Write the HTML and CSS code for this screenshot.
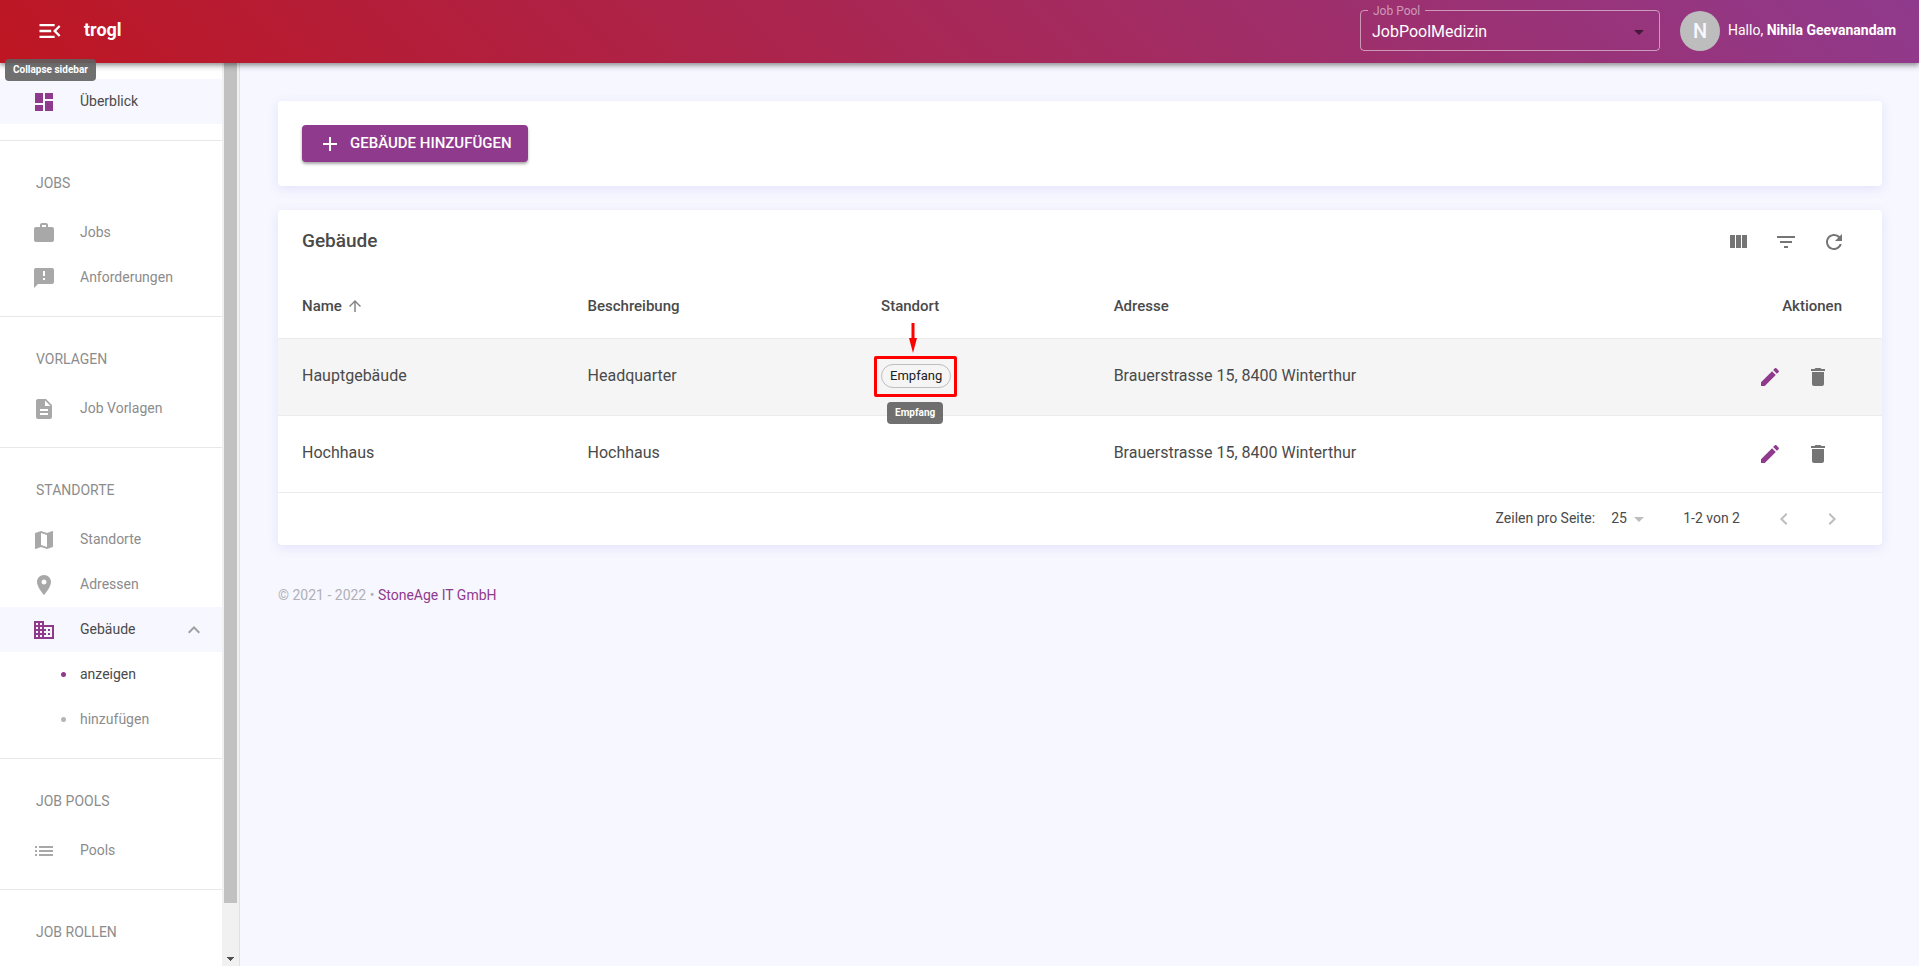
FILE: index.html
```html
<!DOCTYPE html>
<html lang="de">
<head>
<meta charset="utf-8">
<title>trogl – Gebäude</title>
<link rel="stylesheet" href="styles.css">
</head>
<body>
<header class="topbar">
  <button class="icon-button menu-button" type="button" aria-label="Collapse sidebar" aria-describedby="menu-tip">
    <svg class="icon icon-large" viewBox="0 0 24 24"><path d="M3 18h13v-2H3v2zM3 6v2h13V6H3zm0 7h10v-2H3v2zm18 2.590L17.420 12 21 8.410 19.590 7l-5 5 5 5L21 15.590z"/></svg>
    <span class="tooltip menu-tip" role="tooltip" id="menu-tip">Collapse sidebar</span>
  </button>
  <a class="brand" href="#">trogl</a>
  <fieldset class="pool-field">
    <legend><label for="pool">Job Pool</label></legend>
    <select id="pool"><option>JobPoolMedizin</option></select>
    <svg class="icon pool-arrow" viewBox="0 0 24 24"><path d="M7 10l5 5 5-5z"/></svg>
  </fieldset>
  <div class="account">
    <span class="avatar">N</span>
    <span class="greeting">Hallo, <strong>Nihila Geevanandam</strong></span>
  </div>
</header>
<div class="shell">
  <aside class="sidebar">
    <nav class="nav">
      <section class="nav-group">
        <a class="nav-item active" href="#"><svg class="icon" viewBox="0 0 24 24"><path d="M3 13h8V3H3v10zm0 8h8v-6H3v6zm10 0h8V11h-8v10zm0-18v6h8V3h-8z"/></svg><span>Überblick</span></a>
      </section>
      <section class="nav-group">
        <h2 class="nav-title">JOBS</h2>
        <a class="nav-item" href="#"><svg class="icon" viewBox="0 0 24 24"><path d="M20 6h-4V4c0-1.110-.890-2-2-2h-4c-1.110 0-2 .890-2 2v2H4c-1.110 0-2 .890-2 2v11c0 1.110.890 2 2 2h16c1.110 0 2-.890 2-2V8c0-1.110-.890-2-2-2zm-6 0h-4V4h4v2z"/></svg><span>Jobs</span></a>
        <a class="nav-item" href="#"><svg class="icon" viewBox="0 0 24 24"><path d="M20 2H4c-1.100 0-2 .900-2 2v18l4-4h14c1.100 0 2-.900 2-2V4c0-1.100-.900-2-2-2zm-7 12h-2v-2h2v2zm0-4h-2V5h2v5z"/></svg><span>Anforderungen</span></a>
      </section>
      <section class="nav-group">
        <h2 class="nav-title">VORLAGEN</h2>
        <a class="nav-item" href="#"><svg class="icon" viewBox="0 0 24 24"><path d="M14 2H6c-1.100 0-2 .900-2 2v16c0 1.100.900 2 2 2h12c1.100 0 2-.900 2-2V8l-6-6zm2 16H8v-2h8v2zm0-4H8v-2h8v2zm-3-5V3.500L18.500 9H13z"/></svg><span>Job Vorlagen</span></a>
      </section>
      <section class="nav-group">
        <h2 class="nav-title">STANDORTE</h2>
        <a class="nav-item" href="#"><svg class="icon" viewBox="0 0 24 24"><path d="M20.500 3l-.160.030L15 5.100 9 3 3.360 4.900c-.210.070-.360.250-.360.480V20.500c0 .280.220.500.500.500l.160-.030L9 18.900l6 2.100 5.640-1.900c.210-.070.360-.250.360-.480V3.500c0-.280-.220-.500-.500-.500zM15 19l-6-2.110V5l6 2.110V19z"/></svg><span>Standorte</span></a>
        <a class="nav-item" href="#"><svg class="icon" viewBox="0 0 24 24"><path d="M12 2C8.130 2 5 5.130 5 9c0 5.250 7 13 7 13s7-7.750 7-13c0-3.870-3.130-7-7-7zm0 9.500c-1.380 0-2.500-1.120-2.500-2.500s1.120-2.500 2.500-2.500 2.500 1.120 2.500 2.500-1.120 2.500-2.500 2.500z"/></svg><span>Adressen</span></a>
        <a class="nav-item active" href="#"><svg class="icon" viewBox="0 0 24 24"><path d="M12 7V3H2v18h20V7H12zM6 19H4v-2h2v2zm0-4H4v-2h2v2zm0-4H4V9h2v2zm0-4H4V5h2v2zm4 12H8v-2h2v2zm0-4H8v-2h2v2zm0-4H8V9h2v2zm0-4H8V5h2v2zm10 12h-8v-2h2v-2h-2v-2h2v-2h-2V9h8v10zm-2-8h-2v2h2v-2zm0 4h-2v2h2v-2z"/></svg><span>Gebäude</span><svg class="icon nav-chevron" viewBox="0 0 24 24"><path d="M12 8l-6 6 1.410 1.410L12 10.830l4.590 4.580L18 14z"/></svg></a>
        <a class="nav-item nav-sub current" href="#"><i class="dot"></i><span>anzeigen</span></a>
        <a class="nav-item nav-sub" href="#"><i class="dot"></i><span>hinzufügen</span></a>
      </section>
      <section class="nav-group">
        <h2 class="nav-title">JOB POOLS</h2>
        <a class="nav-item" href="#"><svg class="icon" viewBox="0 0 24 24"><path d="M3 13h2v-2H3v2zm0 4h2v-2H3v2zm0-8h2V7H3v2zm4 4h14v-2H7v2zm0 4h14v-2H7v2zM7 7v2h14V7H7z"/></svg><span>Pools</span></a>
      </section>
      <section class="nav-group">
        <h2 class="nav-title">JOB ROLLEN</h2>
      </section>
    </nav>
    <div class="scrollbar" aria-hidden="true">
      <div class="scroll-thumb"></div>
      <svg class="scroll-arrow" viewBox="0 0 17 17"><path d="M5 8h7v1h-1v1h-1v1H9v1H8v-1H7v-1H6V9H5z"/></svg>
    </div>
  </aside>
  <main class="main">
    <section class="card actions-card">
      <button class="primary-button" type="button"><svg class="icon" viewBox="0 0 24 24"><path d="M19 13h-6v6h-2v-6H5v-2h6V5h2v6h6v2z"/></svg><span>GEBÄUDE HINZUFÜGEN</span></button>
    </section>
    <section class="card">
      <div class="toolbar">
        <h1 class="card-title">Gebäude</h1>
        <button class="icon-button" type="button" aria-label="Spalten"><svg class="icon" viewBox="0 0 24 24"><path d="M4 5h5v13H4zM10 5h5v13h-5zM16 5h5v13h-5z"/></svg></button>
        <button class="icon-button" type="button" aria-label="Filter"><svg class="icon" viewBox="0 0 24 24"><path d="M10 18h4v-2h-4v2zM3 6v2h18V6H3zm3 7h12v-2H6v2z"/></svg></button>
        <button class="icon-button" type="button" aria-label="Aktualisieren"><svg class="icon" viewBox="0 0 24 24"><path d="M17.650 6.350C16.200 4.900 14.210 4 12 4c-4.420 0-7.990 3.580-7.990 8s3.570 8 7.990 8c3.730 0 6.840-2.550 7.730-6h-2.080c-.820 2.330-3.040 4-5.650 4-3.310 0-6-2.690-6-6s2.690-6 6-6c1.660 0 3.140.690 4.220 1.780L13 11h7V4l-2.350 2.350z"/></svg></button>
      </div>
      <table class="table">
        <colgroup><col class="col-name"><col class="col-desc"><col class="col-site"><col><col class="col-actions"></colgroup>
        <thead>
          <tr>
            <th><span class="sort">Name <svg class="icon icon-small" viewBox="0 0 24 24"><path d="M4 12l1.410 1.410L11 7.830V20h2V7.830l5.580 5.590L20 12l-8-8-8 8z"/></svg></span></th>
            <th>Beschreibung</th><th>Standort</th><th>Adresse</th><th class="cell-actions">Aktionen</th>
          </tr>
        </thead>
        <tbody>
          <tr class="hovered">
            <td>Hauptgebäude</td><td>Headquarter</td>
            <td><span class="chip-wrap"><span class="chip">Empfang</span>
              <span class="marker"></span>
              <svg class="marker-arrow" viewBox="0 0 10 30"><path d="M3.500 0h3v15H9L5 30 1 15h2.500z"/></svg>
              <span class="tooltip chip-tip" role="tooltip">Empfang</span></span></td>
            <td>Brauerstrasse 15, 8400 Winterthur</td>
            <td class="cell-actions"><div class="row-actions">
              <button class="icon-button edit" type="button" aria-label="Bearbeiten"><svg class="icon" viewBox="0 0 24 24"><path d="M3 17.250V21h3.750L17.810 9.940l-3.750-3.750L3 17.250zM20.710 7.040c.390-.390.390-1.020 0-1.410l-2.340-2.340c-.390-.390-1.020-.390-1.410 0l-1.830 1.830 3.750 3.750 1.830-1.830z"/></svg></button>
              <button class="icon-button" type="button" aria-label="Löschen"><svg class="icon" viewBox="0 0 24 24"><path d="M6 19c0 1.100.900 2 2 2h8c1.100 0 2-.900 2-2V7H6v12zM19 4h-3.500l-1-1h-5l-1 1H5v2h14V4z"/></svg></button>
            </div></td>
          </tr>
          <tr>
            <td>Hochhaus</td><td>Hochhaus</td><td></td>
            <td>Brauerstrasse 15, 8400 Winterthur</td>
            <td class="cell-actions"><div class="row-actions">
              <button class="icon-button edit" type="button" aria-label="Bearbeiten"><svg class="icon" viewBox="0 0 24 24"><path d="M3 17.250V21h3.750L17.810 9.940l-3.750-3.750L3 17.250zM20.710 7.040c.390-.390.390-1.020 0-1.410l-2.340-2.340c-.390-.390-1.020-.390-1.410 0l-1.830 1.830 3.750 3.750 1.830-1.830z"/></svg></button>
              <button class="icon-button" type="button" aria-label="Löschen"><svg class="icon" viewBox="0 0 24 24"><path d="M6 19c0 1.100.900 2 2 2h8c1.100 0 2-.900 2-2V7H6v12zM19 4h-3.500l-1-1h-5l-1 1H5v2h14V4z"/></svg></button>
            </div></td>
          </tr>
        </tbody>
      </table>
      <div class="pagination">
        <label for="rows">Zeilen pro Seite:</label>
        <span class="rows-field"><select id="rows"><option>25</option></select><svg class="icon rows-arrow" viewBox="0 0 24 24"><path d="M7 10l5 5 5-5z"/></svg></span>
        <span class="range">1-2 von 2</span>
        <button class="icon-button pager" type="button" aria-label="Vorherige Seite"><svg class="icon" viewBox="0 0 24 24"><path d="M15.410 7.410L14 6l-6 6 6 6 1.410-1.410L10.830 12z"/></svg></button>
        <button class="icon-button pager" type="button" aria-label="Nächste Seite"><svg class="icon" viewBox="0 0 24 24"><path d="M10 6L8.590 7.410 13.170 12l-4.580 4.590L10 18l6-6z"/></svg></button>
      </div>
    </section>
    <footer class="footer">© 2021 - 2022 • <a href="#">StoneAge IT GmbH</a></footer>
  </main>
</div>
</body>
</html>
```
FILE: styles.css
```css
* {
  box-sizing: border-box;
}

body {
  margin: 0;
  height: 100vh;
  display: flex;
  flex-direction: column;
  overflow: hidden;
  background: #f7f7ff;
  color: #4a4a4a;
  font-family: Roboto, "Liberation Sans", sans-serif;
  font-size: 14px;
  line-height: 20px;
}

button,
select {
  font: inherit;
  border: 0;
  background: none;
}

a {
  color: inherit;
  text-decoration: none;
}

.icon {
  width: 24px;
  height: 24px;
  flex: none;
  display: block;
  fill: currentColor;
}

.icon-large {
  width: 28px;
  height: 28px;
}

.icon-small {
  width: 18px;
  height: 18px;
}

.icon-button {
  width: 48px;
  height: 48px;
  padding: 0;
  display: flex;
  align-items: center;
  justify-content: center;
  color: #757575;
}

.tooltip {
  position: absolute;
  padding: 4px 8px;
  border-radius: 4px;
  background: rgba(97, 97, 97, 0.9);
  color: #fff;
  font-size: 10px;
  font-weight: 700;
  line-height: 14px;
  white-space: nowrap;
}

/* Top bar */
.topbar {
  position: relative;
  z-index: 2;
  flex: none;
  height: 63px;
  padding: 0 19px 2px 26px;
  display: flex;
  align-items: center;
  background: linear-gradient(45deg, #be1622, #903a8d);
  box-shadow: 0 2px 4px rgba(0, 0, 0, 0.3), 0 4px 6px rgba(0, 0, 0, 0.15);
  color: #fff;
}

.menu-button {
  position: relative;
  color: #fff;
}

.menu-tip {
  top: 52px;
  left: -21px;
}

.brand {
  margin-left: 10px;
  padding-bottom: 2px;
  font-size: 18px;
  font-weight: 700;
}

.pool-field {
  position: relative;
  width: 300px;
  height: 46px;
  margin: 0 20px 6px auto;
  padding: 0 0 0 11px;
  border: 1px solid rgba(255, 255, 255, 0.5);
  border-radius: 4px;
}

.pool-field legend {
  margin-left: -4px;
  padding: 0 5px;
  color: rgba(255, 255, 255, 0.5);
  font-size: 12px;
  line-height: 12px;
}

.pool-field select {
  width: 100%;
  padding: 0;
  appearance: none;
  color: #fff;
  font-size: 16px;
  line-height: 30px;
}

.pool-arrow {
  position: absolute;
  top: 3px;
  right: 8px;
  color: rgba(0, 0, 0, 0.54);
  pointer-events: none;
}

.account {
  display: flex;
  align-items: center;
  gap: 8px;
}

.greeting {
  min-width: 172px;
  padding-bottom: 2px;
}

.avatar {
  width: 40px;
  height: 40px;
  border-radius: 50%;
  background: #bdbdbd;
  color: #f7f7ff;
  font-size: 20px;
  font-weight: 500;
  line-height: 40px;
  text-align: center;
}

/* Sidebar */
.shell {
  flex: 1;
  min-height: 0;
  display: flex;
}

.sidebar {
  width: 240px;
  flex: none;
  display: flex;
  background: #fff;
  border-right: 1px solid #e0e0e0;
}

.nav {
  flex: 1;
  overflow: hidden;
}

.nav-group {
  padding: 16px 0;
}

.nav-group + .nav-group {
  border-top: 1px solid #e8e8e8;
}

.nav-title {
  margin: 0;
  padding: 16px 36px 17px;
  color: #8c8c8c;
  font-size: 14px;
  font-weight: 400;
}

.nav-item {
  height: 45px;
  padding: 0 16px 0 32px;
  display: flex;
  align-items: center;
  gap: 24px;
  color: #8c8c8c;
}

.nav-item span {
  padding-bottom: 2px;
}

.nav-item .icon {
  color: #a8a8a8;
}

.nav-item.active {
  background: #f7f7ff;
}

.nav-item.active,
.nav-item.current {
  color: #4a4a4a;
}

.nav-item.active .icon {
  color: #903a8d;
}

.nav-item .nav-chevron,
.nav-item.active .nav-chevron {
  margin-left: auto;
  color: #9e9e9e;
}

.nav-sub {
  padding-left: 61px;
  gap: 14px;
}

.dot {
  width: 5px;
  height: 5px;
  border-radius: 50%;
  background: #b5b5b5;
}

.current .dot {
  background: #903a8d;
}

.scrollbar {
  width: 17px;
  display: flex;
  flex-direction: column;
  background: #f1f1f1;
}

.scroll-thumb {
  flex: 1;
  margin: 0 2px 46px;
  background: #c1c1c1;
}

.scroll-arrow {
  width: 17px;
  height: 17px;
  fill: #505050;
}

/* Main area */
.main {
  flex: 1;
  min-width: 0;
  padding: 38px 37px 0 38px;
  display: flex;
  flex-direction: column;
  gap: 24px;
}

.card {
  border-radius: 4px;
  background: #fff;
  box-shadow: 0 3px 12px rgba(80, 80, 220, 0.12);
}

.actions-card {
  padding: 24px;
}

.primary-button {
  height: 37px;
  padding: 0 16px;
  display: flex;
  align-items: center;
  gap: 8px;
  border-radius: 4px;
  background: #903a8d;
  box-shadow: 0 2px 3px rgba(0, 0, 0, 0.35);
  color: #fff;
  font-size: 15px;
  font-weight: 500;
}

.primary-button span {
  padding-bottom: 2px;
}

.toolbar {
  height: 64px;
  padding: 0 24px;
  display: flex;
  align-items: center;
}

.card-title {
  margin: 0 auto 0 0;
  padding-bottom: 2px;
  font-size: 19px;
  font-weight: 500;
}

.table {
  width: 100%;
  border-collapse: separate;
  border-spacing: 0;
  table-layout: fixed;
  font-size: 16px;
}

.col-name,
.col-desc {
  width: 18.3%;
}

.col-site {
  width: 14.5%;
}

.col-actions {
  width: 200px;
}

.table th,
.table td {
  padding: 0 16px;
  border-bottom: 1px solid #ebebeb;
  text-align: left;
}

.table th {
  height: 65px;
  font-size: 15px;
  font-weight: 500;
}

.table td {
  height: 77px;
  padding-bottom: 2px;
}

.table th:first-child,
.table td:first-child {
  padding-left: 24px;
}

.table .cell-actions {
  padding-right: 40px;
  padding-bottom: 0;
  text-align: right;
}

.hovered {
  background: #f5f5f5;
}

.sort {
  display: flex;
  align-items: center;
  gap: 4px;
}

.sort .icon {
  color: #858585;
}

.row-actions {
  display: flex;
  justify-content: flex-end;
}

.edit {
  color: #903a8d;
}

.chip-wrap {
  position: relative;
  display: inline-block;
}

.chip {
  display: block;
  padding: 0 8px;
  border: 1px solid #bdbdbd;
  border-radius: 12px;
  color: #212121;
  font-size: 13px;
  line-height: 22px;
}

.marker {
  position: absolute;
  inset: -8px -6px -9px -7px;
  border: 3px solid #f00;
  border-radius: 2px;
}

.marker-arrow {
  position: absolute;
  top: -41px;
  left: 27px;
  width: 10px;
  height: 30px;
  fill: #f00;
}

.chip-tip {
  top: 38px;
  left: 6px;
}

.pagination {
  height: 52px;
  padding-right: 26px;
  display: flex;
  align-items: center;
}

.pagination label,
.range {
  padding-bottom: 2px;
}

.pagination label {
  margin-left: auto;
}

.rows-field {
  display: flex;
  align-items: center;
  margin: 0 32px 0 16px;
}

.rows-field select {
  padding: 0 0 2px;
  appearance: none;
  color: inherit;
}

.rows-arrow,
.pager {
  color: #bdbdbd;
}

.range {
  margin-right: 20px;
}

.footer {
  padding-top: 16px;
  color: #b0b0b5;
}

.footer a {
  color: #903a8d;
}
```
